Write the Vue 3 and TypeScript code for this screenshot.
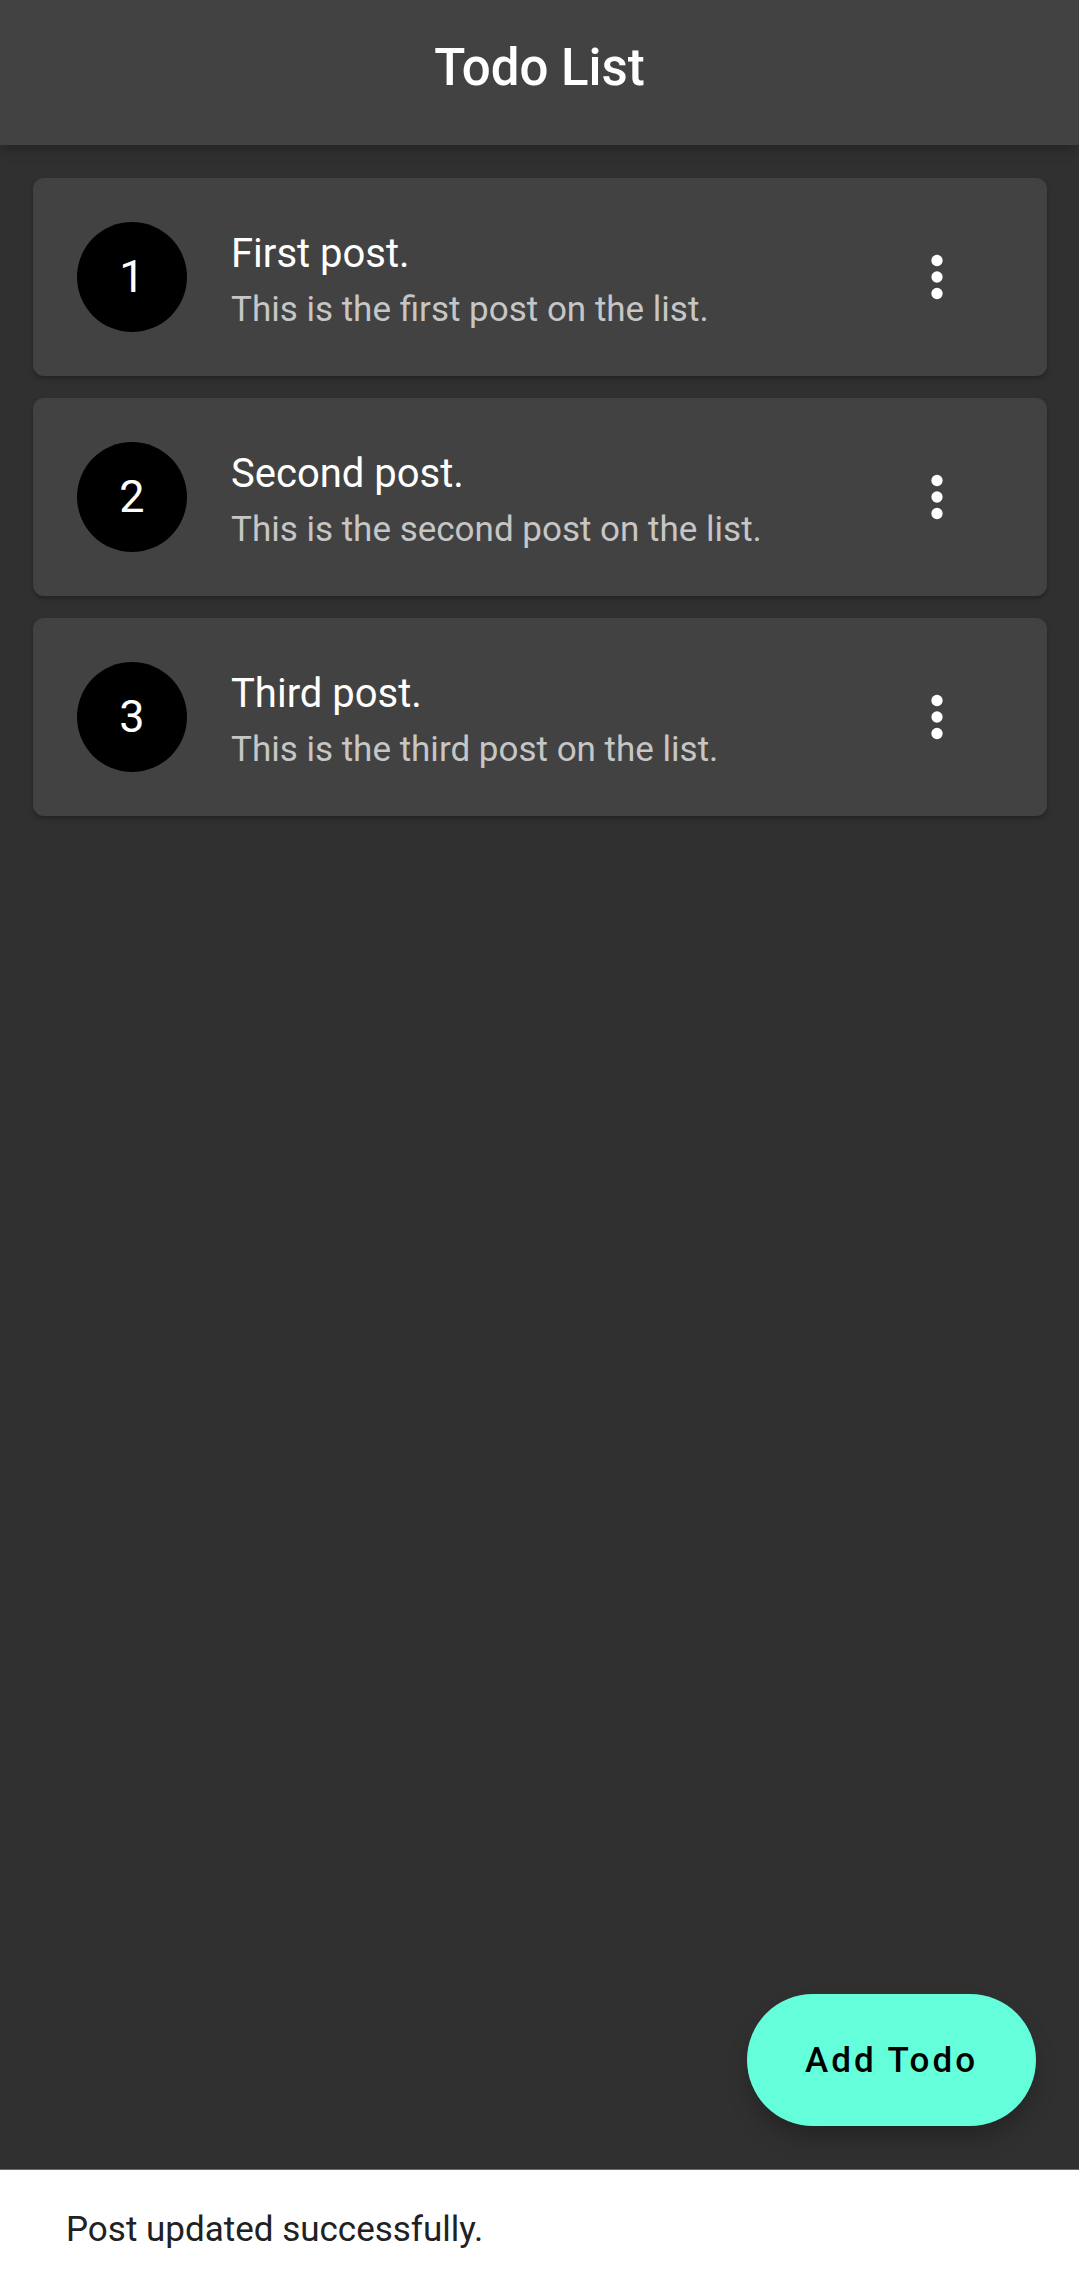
<script setup lang="ts">
interface Todo {
  id: number
  title: string
  body: string
}

const todos: Todo[] = [
  { id: 1, title: 'First post.', body: 'This is the first post on the list.' },
  { id: 2, title: 'Second post.', body: 'This is the second post on the list.' },
  { id: 3, title: 'Third post.', body: 'This is the third post on the list.' },
]
</script>

<template>
  <div class="screen">
    <header class="app-bar">
      <h1>Todo List</h1>
    </header>
    <main class="content">
      <ul class="list">
        <li v-for="todo in todos" :key="todo.id" class="card">
          <span class="avatar">{{ todo.id }}</span>
          <div class="text">
            <h2>{{ todo.title }}</h2>
            <p>{{ todo.body }}</p>
          </div>
          <button class="menu" type="button" :aria-label="`Options for ${todo.title}`">
            <svg viewBox="0 0 24 24" aria-hidden="true">
              <circle cx="12" cy="6" r="2.05" />
              <circle cx="12" cy="12" r="2.05" />
              <circle cx="12" cy="18" r="2.05" />
            </svg>
          </button>
        </li>
      </ul>
      <button class="fab" type="button">Add Todo</button>
    </main>
    <div class="snackbar" role="status">Post updated successfully.</div>
  </div>
</template>

<style>
body {
  background: #303030;
}
</style>

<style scoped>
.screen {
  display: flex;
  flex-direction: column;
  min-height: 100vh;
  background: #303030;
  color: #fff;
  font-family: Roboto, sans-serif;
}

h1,
h2,
p,
ul {
  margin: 0;
  padding: 0;
}

.app-bar {
  display: flex;
  justify-content: center;
  padding: 36px 44px 45px;
  background: #424242;
  box-shadow: 0 8px 12px -3px rgba(0, 0, 0, 0.26);
}

h1 {
  font-size: 51px;
  font-weight: 500;
  line-height: 64px;
}

.content {
  display: flex;
  flex: 1;
  flex-direction: column;
  justify-content: space-between;
  padding: 33px 32px 43px 33px;
}

.list {
  display: flex;
  flex-direction: column;
  gap: 22px;
  list-style: none;
}

.card {
  display: flex;
  align-items: center;
  gap: 44px;
  padding: 33px 44px;
  border-radius: 11px;
  background: #424242;
  box-shadow: 0 3px 4px rgba(0, 0, 0, 0.26);
}

.avatar {
  display: flex;
  box-sizing: border-box;
  align-items: center;
  justify-content: center;
  width: 110px;
  height: 110px;
  padding-bottom: 2px;
  border-radius: 50%;
  background: #000;
  font-size: 45px;
}

.text {
  flex: 1;
  padding-top: 10px;
}

h2 {
  font-size: 40px;
  font-weight: 400;
  line-height: 56px;
}

p {
  color: #c6c6c6;
  font-size: 35px;
  line-height: 56px;
}

button {
  border: 0;
  font-family: inherit;
}

.menu {
  display: flex;
  align-items: center;
  justify-content: center;
  width: 132px;
  height: 132px;
  padding: 0;
  background: none;
}

.menu svg {
  width: 66px;
  height: 66px;
  fill: #fff;
}

.fab {
  align-self: flex-end;
  height: 132px;
  margin-right: 11px;
  padding: 0 58px;
  border-radius: 66px;
  background: #64ffda;
  box-shadow: 0 14px 24px -4px rgba(0, 0, 0, 0.28);
  color: #000;
  font-size: 35px;
  font-weight: 500;
  letter-spacing: 3px;
}

.snackbar {
  padding: 39px 66px 37px;
  border-top: 1px solid #6a6a6a;
  background: #fff;
  color: #212121;
  font-size: 35px;
  line-height: 42px;
}
</style>
